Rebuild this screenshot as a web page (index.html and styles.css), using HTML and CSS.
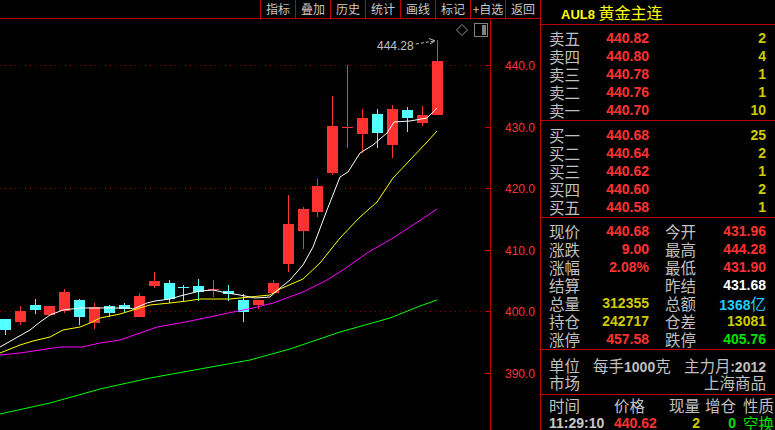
FILE: index.html
```html
<!DOCTYPE html>
<html>
	<head>
		<meta charset="utf-8">
		<title>AUL8 黄金主连</title>
		<link rel="stylesheet" href="styles.css">
	</head>
	<body>
		<div class="app">
			<div class="left">
				<div class="toolbar">
					<span>指标</span><span>叠加</span><span>历史</span><span>统计</span><span>画线</span><span>标记</span><span>+自选</span><span>返回</span>
				</div>
				<svg class="chart" width="540" height="411" viewBox="0 19 540 411" shape-rendering="crispEdges">
					<!-- grid -->
					<g stroke="#900000" stroke-dasharray="1 4">
						<line x1="0" y1="65.5" x2="490" y2="65.5"/>
						<line x1="0" y1="188.5" x2="490" y2="188.5"/>
						<line x1="0" y1="311.5" x2="490" y2="311.5"/>
					</g>
					<line x1="490.5" y1="19" x2="490.5" y2="430" stroke="#c00000"/>
					<g stroke="#c00000">
						<line x1="485" y1="65.5" x2="490" y2="65.5"/>
						<line x1="485" y1="127.5" x2="490" y2="127.5"/>
						<line x1="485" y1="188.5" x2="490" y2="188.5"/>
						<line x1="485" y1="250.5" x2="490" y2="250.5"/>
						<line x1="485" y1="311.5" x2="490" y2="311.5"/>
						<line x1="485" y1="373.5" x2="490" y2="373.5"/>
					</g>
					<g class="axis">
						<text x="505" y="70">440.0</text>
						<text x="505" y="132">430.0</text>
						<text x="505" y="193">420.0</text>
						<text x="505" y="255">410.0</text>
						<text x="505" y="316">400.0</text>
						<text x="505" y="378">390.0</text>
					</g>

					<!-- candles: wick then body -->
					<g class="up">
						<rect x="20" y="306" width="1" height="19"/><rect x="15" y="311" width="11" height="11"/>
						<rect x="49" y="306" width="1" height="9"/><rect x="44" y="306" width="11" height="9"/>
						<rect x="64" y="289" width="1" height="24"/><rect x="59" y="292" width="11" height="19"/>
						<rect x="94" y="303" width="1" height="26"/><rect x="89" y="307" width="11" height="16"/>
						<rect x="139" y="293" width="1" height="24"/><rect x="134" y="296" width="11" height="21"/>
						<rect x="154" y="272" width="1" height="16"/><rect x="149" y="281" width="11" height="5"/>
						<rect x="213" y="280" width="1" height="17"/><rect x="208" y="289" width="11" height="1"/>
						<rect x="258" y="300" width="1" height="9"/><rect x="253" y="300" width="11" height="5"/>
						<rect x="273" y="280" width="1" height="13"/><rect x="268" y="283" width="11" height="10"/>
						<rect x="288" y="195" width="1" height="77"/><rect x="283" y="224" width="11" height="40"/>
						<rect x="303" y="207" width="1" height="42"/><rect x="298" y="209" width="11" height="22"/>
						<rect x="317" y="179" width="1" height="38"/><rect x="312" y="186" width="11" height="26"/>
						<rect x="332" y="96" width="1" height="79"/><rect x="327" y="126" width="11" height="47"/>
						<rect x="347" y="65" width="1" height="83"/><rect x="342" y="127" width="11" height="1"/>
						<rect x="362" y="109" width="1" height="44"/><rect x="357" y="118" width="11" height="16"/>
						<rect x="392" y="105" width="1" height="53"/><rect x="387" y="109" width="11" height="36"/>
						<rect x="422" y="106" width="1" height="20"/><rect x="417" y="115" width="11" height="8"/>
						<rect x="437" y="40" width="1" height="75"/><rect x="432" y="61" width="11" height="54"/>
					</g>
					<g class="down">
						<rect x="5" y="319" width="1" height="16"/><rect x="0" y="319" width="11" height="11"/>
						<rect x="35" y="299" width="1" height="15"/><rect x="30" y="305" width="11" height="5"/>
						<rect x="79" y="299" width="1" height="26"/><rect x="74" y="300" width="11" height="17"/>
						<rect x="109" y="305" width="1" height="12"/><rect x="104" y="306" width="11" height="7"/>
						<rect x="124" y="303" width="1" height="9"/><rect x="119" y="305" width="11" height="4"/>
						<rect x="169" y="280" width="1" height="23"/><rect x="164" y="283" width="11" height="16"/>
						<rect x="183" y="285" width="1" height="16"/><rect x="178" y="287" width="11" height="1"/>
						<rect x="198" y="279" width="1" height="22"/><rect x="193" y="286" width="11" height="6"/>
						<rect x="228" y="285" width="1" height="16"/><rect x="223" y="291" width="11" height="3"/>
						<rect x="243" y="294" width="1" height="28"/><rect x="238" y="300" width="11" height="12"/>
						<rect x="377" y="109" width="1" height="39"/><rect x="372" y="114" width="11" height="19"/>
						<rect x="407" y="107" width="1" height="25"/><rect x="402" y="110" width="11" height="8"/>
					</g>

					<!-- moving averages -->
					<g fill="none" stroke-width="1" shape-rendering="auto">
						<polyline stroke="#00ff00" points="0,414 50,403 100,389 150,378 200,369 250,360 290,349 340,332 390,318 420,306 437,300"/>
						<polyline stroke="#ff00ff" points="0,355 20,353 60,347 82,347 100,343 120,340 140,333 157,327 180,323 200,319 233,312 253,308 273,303 303,292 327,280 343,270 367,253 393,238 413,225 437,209"/>
						<polyline stroke="#ffff00" points="0,353 20,345 33,341 50,337 63,330 80,327 90,323 100,318 120,314 133,310 150,305 170,303 187,301 200,299 230,299 250,297 270,295 280,289 303,279 320,263 340,238 360,217 377,202 393,178 410,160 427,142 437,131"/>
						<polyline stroke="#ffffff" points="0,347 30,330 40,322 50,315 63,310 80,308 130,308 133,309 147,303 155,301 170,299 180,296 200,291 213,290 227,293 240,295 255,298 270,297 280,288 290,280 303,265 313,247 327,210 340,177 348,172 360,153 373,145 387,133 394,122 410,121 427,118 437,108"/>
					</g>

					<!-- max price marker -->
					<text class="mark" x="377" y="50">444.28</text>
					<g stroke="#c0c0c0" fill="none" shape-rendering="auto">
						<line x1="416" y1="44" x2="434" y2="41" stroke-dasharray="3 2"/>
						<polyline points="429,38.5 435,40.8 430,44"/>
					</g>

					<!-- corner icons -->
					<g stroke="#909090" fill="none" shape-rendering="auto">
						<polygon points="462,24.5 467.5,30 462,35.5 456.5,30"/>
					</g>
					<rect x="474.5" y="23.5" width="13" height="13" fill="none" stroke="#808080"/>
					<rect x="482" y="25" width="4" height="10" fill="#808080"/>
				</svg>
			</div>

			<div class="quote">
				<div class="title"><span class="code">AUL8</span> 黄金主连</div>

				<div class="book sell">
					<div class="row"><span class="lbl">卖五</span><span class="num red">440.82</span><span class="num yel">2</span></div>
					<div class="row"><span class="lbl">卖四</span><span class="num red">440.80</span><span class="num yel">4</span></div>
					<div class="row"><span class="lbl">卖三</span><span class="num red">440.78</span><span class="num yel">1</span></div>
					<div class="row"><span class="lbl">卖二</span><span class="num red">440.76</span><span class="num yel">1</span></div>
					<div class="row"><span class="lbl">卖一</span><span class="num red">440.70</span><span class="num yel">10</span></div>
				</div>

				<div class="book buy">
					<div class="row"><span class="lbl">买一</span><span class="num red">440.68</span><span class="num yel">25</span></div>
					<div class="row"><span class="lbl">买二</span><span class="num red">440.64</span><span class="num yel">2</span></div>
					<div class="row"><span class="lbl">买三</span><span class="num red">440.62</span><span class="num yel">1</span></div>
					<div class="row"><span class="lbl">买四</span><span class="num red">440.60</span><span class="num yel">2</span></div>
					<div class="row"><span class="lbl">买五</span><span class="num red">440.58</span><span class="num yel">1</span></div>
				</div>

				<div class="stats">
					<div class="srow"><span class="lbl">现价</span><span class="num red">440.68</span><span class="lbl">今开</span><span class="num red">431.96</span></div>
					<div class="srow"><span class="lbl">涨跌</span><span class="num red">9.00</span><span class="lbl">最高</span><span class="num red">444.28</span></div>
					<div class="srow"><span class="lbl">涨幅</span><span class="num red">2.08%</span><span class="lbl">最低</span><span class="num red">431.90</span></div>
					<div class="srow"><span class="lbl">结算</span><span class="num"></span><span class="lbl">昨结</span><span class="num wht">431.68</span></div>
					<div class="srow"><span class="lbl">总量</span><span class="num yel">312355</span><span class="lbl">总额</span><span class="num cyan">1368<span class="cjk">亿</span></span></div>
					<div class="srow"><span class="lbl">持仓</span><span class="num yel">242717</span><span class="lbl">仓差</span><span class="num yel">13081</span></div>
					<div class="srow"><span class="lbl">涨停</span><span class="num red">457.58</span><span class="lbl">跌停</span><span class="num grn">405.76</span></div>
				</div>

				<div class="info">
					<div class="irow"><span class="lbl">单位</span><span class="lbl unit">每手<b>1000</b>克</span><span class="lbl end">主力月:<b>2012</b></span></div>
					<div class="irow"><span class="lbl">市场</span><span class="lbl end">上海商品</span></div>
				</div>

				<div class="trades">
					<div class="trow head"><span>时间</span><span>价格</span><span class="r">现量</span><span class="r">增仓</span><span class="nat">性质</span></div>
					<div class="trow"><span class="num gry">11:29:10</span><span class="num red">440.62</span><span class="num yel r">2</span><span class="num grn r">0</span><span class="nat lbl grn">空换</span></div>
				</div>
			</div>
		</div>
	</body>
</html>
```

FILE: styles.css
```css
body
{
	margin:0;
	background-color:#000000;
	font-family:"Noto Sans CJK SC", sans-serif;
}

.app
{
	display:flex;
	width:775px;
	height:430px;
	overflow:hidden;
}

.left
{
	width:540px;
	display:flex;
	flex-direction:column;
}

.toolbar
{
	height:18px;
	border-bottom:1px solid #c00000;
	display:flex;
	justify-content:flex-end;
}

.toolbar span
{
	width:34px;
	border-left:1px solid #c00000;
	color:#c8c8c8;
	font-size:12px;
	line-height:18px;
	text-align:center;
}

.chart
{
	display:block;
}

.up { fill:#ff3232; }
.down { fill:#54ffff; }

.axis text
{
	font-family:"Liberation Sans", Arial, sans-serif;
	font-size:12px;
	fill:#ff3232;
}

.mark
{
	font-family:"Liberation Sans", Arial, sans-serif;
	font-size:12px;
	fill:#c0c0c0;
}

/* right side quote panel */
.quote
{
	width:234px;
	border-left:1px solid #c00000;
	color:#c0c0c0;
}

.title
{
	height:24px;
	line-height:24px;
	border-bottom:1px solid #c00000;
	padding-left:20px;
	color:#ffff00;
	font-size:16px;
}

.code
{
	font-family:"Liberation Sans", Arial, sans-serif;
	font-weight:bold;
	font-size:13px;
}

.lbl
{
	font-family:"Noto Sans CJK SC", sans-serif;
	font-size:15.5px;
	color:#c0c0c0;
}

.num
{
	font-family:"Liberation Sans", Arial, sans-serif;
	font-weight:bold;
	font-size:14px;
	text-align:right;
}

.red { color:#ff3232; }
.yel { color:#cccc00; }
.wht { color:#ffffff; }
.grn { color:#00e000; }
.gry { color:#c8c8c8; }
.cyan { color:#22ccff; }

.cjk
{
	font-family:"Noto Sans CJK SC", sans-serif;
	font-weight:normal;
	font-size:15.5px;
}

.book
{
	border-bottom:1px solid #c00000;
}

.sell { padding:4px 0 1px; }
.buy { padding:5px 0 1px; }

.row
{
	display:grid;
	grid-template-columns:50px 50px 1fr;
	height:18px;
	line-height:18px;
	padding:0 9px 0 8px;
}

.stats
{
	padding:4px 0 1px;
	border-bottom:1px solid #c00000;
}

.srow
{
	display:grid;
	grid-template-columns:50px 50px 66px 1fr;
	height:18px;
	line-height:18px;
	padding:0 9px 0 8px;
}

.srow .lbl:nth-child(3)
{
	padding-left:16px;
}

.info
{
	padding:7px 9px 3px 8px;
	border-bottom:1px solid #c00000;
}

.irow
{
	display:flex;
	height:17px;
	line-height:17px;
}

.irow b
{
	font-family:"Liberation Sans", Arial, sans-serif;
	font-size:14px;
}

.unit
{
	margin-left:13px;
}

.end
{
	margin-left:auto;
}

.trades
{
	padding:1px 0 0 8px;
}

.trow
{
	display:grid;
	grid-template-columns:65px 54px 32px 36px 1fr;
	height:18px;
	line-height:18px;
}

.trow.head span
{
	font-size:15.5px;
	color:#c0c0c0;
}

.trow .r
{
	text-align:right;
}

.trow .nat
{
	padding-left:7px;
}

.trow .num
{
	text-align:left;
}

.trow .num.r
{
	text-align:right;
}
```
